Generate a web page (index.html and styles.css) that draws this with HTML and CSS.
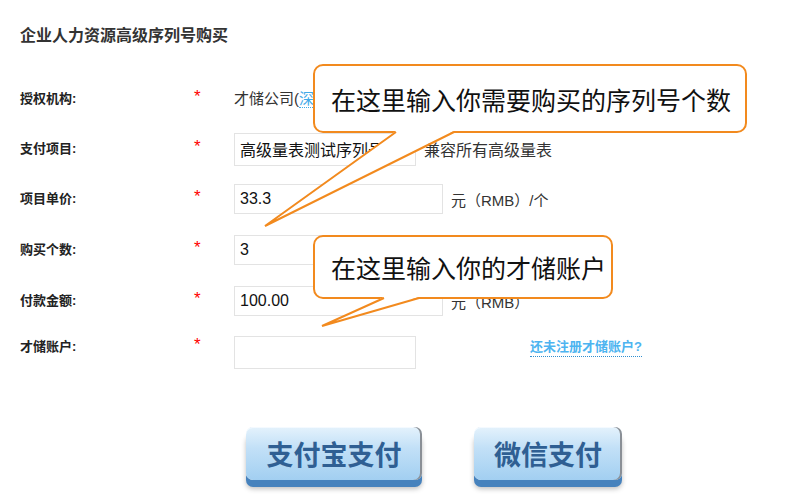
FILE: index.html
```html
<!DOCTYPE html>
<html lang="zh-CN">
<head>
    <meta charset="UTF-8">
    <meta name="viewport" content="width=device-width, initial-scale=1.0">
    <title>企业人力资源高级序列号购买</title>
    <link rel="stylesheet" href="styles.css">
</head>
<body>
    <div class="page">
        <h1 class="title">企业人力资源高级序列号购买</h1>

        <div class="form">
            <div class="row">
                <span class="label">授权机构:</span>
                <span class="star">*</span>
                <span class="text org">才储公司(<a class="link" href="#">深圳</a>)</span>
            </div>
            <div class="row">
                <span class="label">支付项目:</span>
                <span class="star">*</span>
                <input type="text" class="field short tall" value="高级量表测试序列号" readonly>
                <span class="text note">兼容所有高级量表</span>
            </div>
            <div class="row">
                <span class="label">项目单价:</span>
                <span class="star">*</span>
                <input type="text" class="field" value="33.3" readonly>
                <span class="text unit">元（RMB）/个</span>
            </div>
            <div class="row row-wide">
                <span class="label">购买个数:</span>
                <span class="star">*</span>
                <input type="text" class="field" value="3">
            </div>
            <div class="row">
                <span class="label">付款金额:</span>
                <span class="star">*</span>
                <input type="text" class="field" value="100.00" readonly>
                <span class="text unit">元（RMB）</span>
            </div>
            <div class="row row-last">
                <span class="label">才储账户:</span>
                <span class="star">*</span>
                <input type="text" class="field short tall">
                <a class="register" href="#">还未注册才储账户?</a>
            </div>
        </div>

        <div class="buttons">
            <button class="pay pay-ali">支付宝支付</button>
            <button class="pay pay-wx">微信支付</button>
        </div>

        <!-- 提示气泡 -->
        <div class="tip tip-count">在这里输入你需要购买的序列号个数</div>
        <div class="tip tip-account">在这里输入你的才储账户</div>
        <svg class="tails" width="800" height="500" viewBox="0 0 800 500">
            <polygon points="396,131 265,226 454,131" fill="#fff"/>
            <polyline points="396,132 265,226 454,132" fill="none" stroke="#f28a1e" stroke-width="2"/>
            <polygon points="384,297 322,326 419,297" fill="#fff"/>
            <polyline points="384,298 322,326 419,298" fill="none" stroke="#f28a1e" stroke-width="2"/>
        </svg>
    </div>
</body>
</html>
```

FILE: styles.css
```css
body {
    margin: 0;
    font-family: "Liberation Sans", "Noto Sans CJK SC", sans-serif;
    color: #222;
    background: #fff;
}
.page {
    position: relative;
    width: 800px;
    height: 500px;
    overflow: hidden;
}
.title {
    margin: 0;
    padding: 26px 0 0 20px;
    font-size: 16px;
    line-height: 20px;
    font-weight: bold;
    color: #333;
}
.form {
    margin-top: 28px;
}
.row {
    display: flex;
    align-items: center;
    height: 50px;
}
.row-wide { height: 52px; }
.row-last {
    align-items: flex-start;
    padding-top: 10px;
    height: 40px;
}
.label {
    width: 174px;
    padding-left: 20px;
    font-size: 13px;
    font-weight: bold;
    color: #222;
    line-height: 22px;
}
.star {
    width: 40px;
    color: #f00;
    font-size: 17px;
    line-height: 22px;
    position: relative;
    top: -2px;
}
.text {
    font-size: 15px;
    color: #333;
}
.org {
    width: 79px;
    overflow: hidden;
    white-space: nowrap;
    line-height: 22px;
}
.link {
    color: #3fa9e8;
    text-decoration: none;
    border-bottom: 1px dotted #3fa9e8;
}
.field {
    box-sizing: border-box;
    width: 209px;
    height: 30px;
    padding: 0 5px;
    border: 1px solid #e3e3e3;
    font-family: inherit;
    font-size: 16px;
    color: #111;
    background: #fff;
    outline: none;
}
.short { width: 182px; }
.tall { height: 33px; }
.note {
    margin-left: 8px;
    font-size: 16px;
}
.unit {
    margin-left: 8px;
    font-size: 15px;
}
.register {
    margin: 2px 0 0 114px;
    font-size: 13px;
    font-weight: bold;
    color: #4db4f0;
    text-decoration: none;
    border-bottom: 1px dotted #2f8fd0;
    line-height: 18px;
}
.buttons {
    display: flex;
    gap: 52px;
    padding-left: 246px;
    margin-top: 51px;
}
.pay {
    height: 53px;
    padding: 0;
    border: none;
    border-radius: 7px;
    font-family: "Noto Sans CJK SC", sans-serif;
    font-size: 27px;
    font-weight: bold;
    color: #2f5f93;
    background: linear-gradient(#e4f2fc 0%, #c2e0f7 40%, #a2cff1 100%);
    box-shadow: inset -2px 0 0 #8a8f96, inset 0 1px 0 #f4faff, 0 7px 0 #4682bd, 0 9px 5px rgba(0, 0, 0, 0.25);
    cursor: pointer;
}
.pay-ali { width: 176px; }
.pay-wx { width: 148px; }
.tip {
    position: absolute;
    box-sizing: border-box;
    border: 2px solid #f28a1e;
    border-radius: 10px;
    background: #fff;
    padding-left: 16px;
    font-family: "Noto Sans CJK SC", sans-serif;
    font-size: 25px;
    color: #111;
    display: flex;
    align-items: center;
}
.tip-count {
    left: 313px;
    top: 64px;
    width: 434px;
    height: 69px;
}
.tip-account {
    left: 313px;
    top: 235px;
    width: 300px;
    height: 64px;
}
.tails {
    position: absolute;
    left: 0;
    top: 0;
    pointer-events: none;
}
```
